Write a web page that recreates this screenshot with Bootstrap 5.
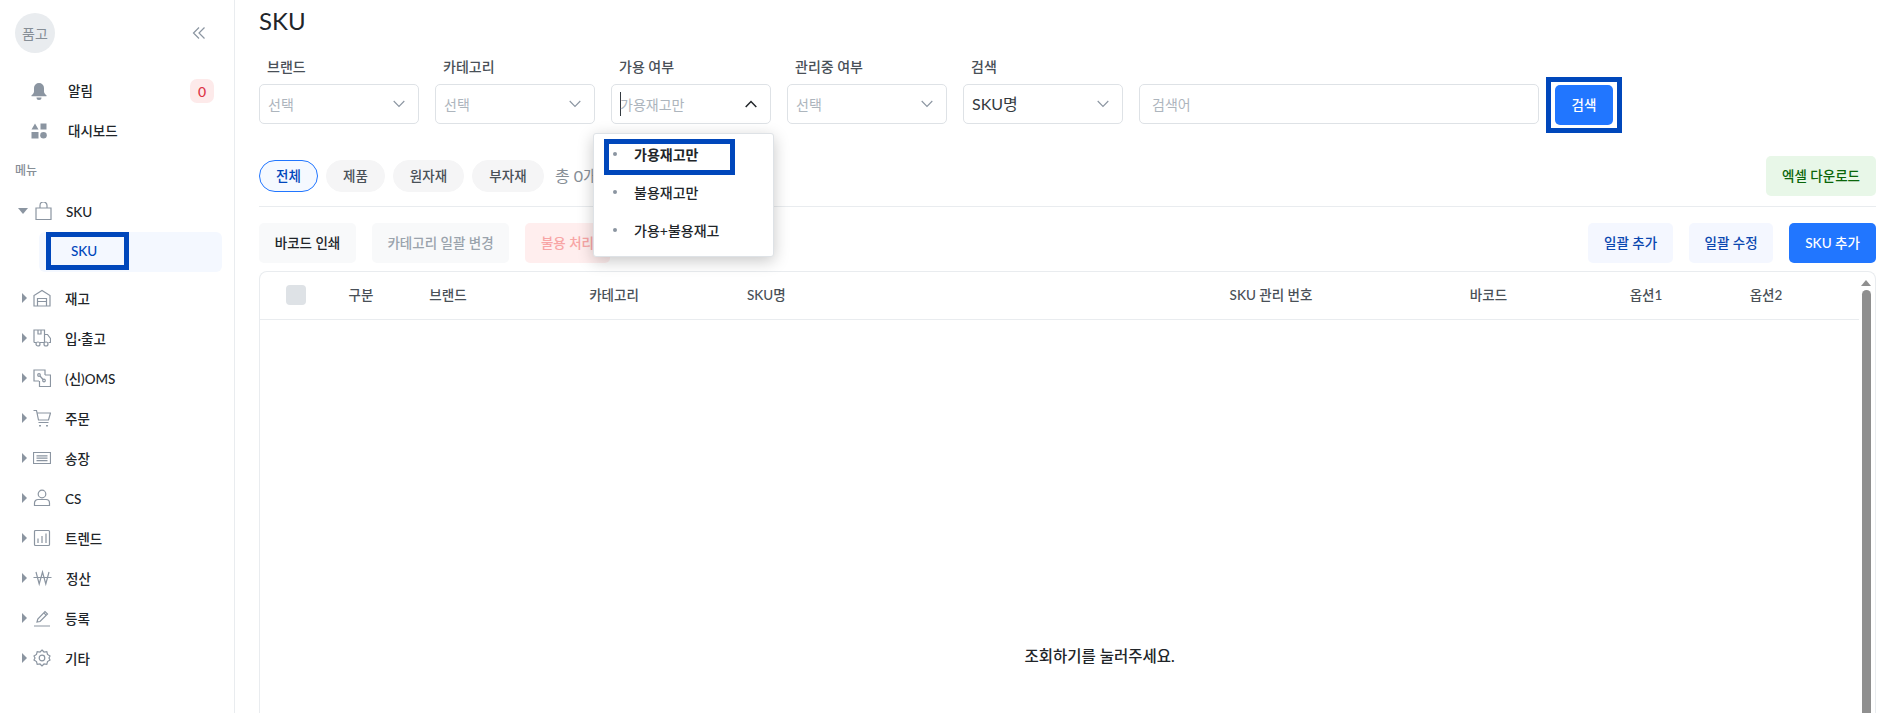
<!DOCTYPE html>
<html lang="ko">
<head>
<meta charset="utf-8">
<title>SKU</title>
<link href="https://cdn.jsdelivr.net/npm/bootstrap@5.3.0/dist/css/bootstrap.min.css" rel="stylesheet">
<style>
html,body{height:713px;overflow:hidden}
body{font-family:Lato,"Noto Sans CJK KR","Noto Sans",sans-serif;font-size:14px;color:#212529;background:#fff}
.shell{height:713px}
.side{width:235px;flex:none;border-right:1px solid #e9ecef;padding-top:13px}
.side-top{height:40px;padding:0 28px 0 15px;margin-bottom:18px}
.avatar{width:40px;height:40px;background:#e9ecef;color:#868e96;font-size:14px}
.srow{height:40px;font-weight:500;font-size:13.5px;color:#212529}
.srow-top{padding:0 20px 0 31px;gap:21px}
.srow-tree{padding-left:22px}
.srow-tree .lbl{margin-left:14px;padding-top:2px}
.tri{width:0;height:0;border-style:solid;border-width:5px 0 5px 5px;border-color:transparent transparent transparent #8b95a1;flex:none;margin-right:6px}
.tri-down{border-width:6px 5px 0 5px;border-color:#8b95a1 transparent transparent transparent;margin-left:-4px;margin-right:7px}
.nic{flex:none;stroke:#8b95a1;fill:none;stroke-width:1.2}
.cnt{width:24px;height:24px;background:#fdeaea;color:#dc3545;font-size:14px;border-radius:7px;font-weight:500}
.menu-h{height:40px;padding-left:15px;font-size:12px;color:#868e96;font-weight:500}
.subwrap{margin:0 12px 6px 39px;height:40px;background:#f4f8ff;border-radius:6px}
.subbox{width:83px;height:38px;margin:1px 0 0 7px;border:5px solid #0047bb;color:#0047bb;font-weight:500;padding-left:20px;line-height:28px;font-size:13.5px}
.mainp{padding:0 17px 0 24px;min-width:0}
.ttl{font-size:24px;font-weight:400;line-height:42px;margin:0;height:44px}
.filters{margin-top:13px;gap:16px}
.fgrp{width:160px;flex:none}
.flab{font-size:14px;font-weight:500;color:#495057;line-height:20px;margin-bottom:7px;padding-left:8px}
.fsel{height:40px;border:1px solid #dee2e6;border-radius:5px;padding:0 10px 0 8px;color:#adb5bd;font-size:14px;background:#fff}
.fsel.val{color:#343a40;font-size:16px}
.fsel svg{margin-right:3px}
.caret{width:1px;height:24px;background:#343a40;margin-right:-1px}
.finput{width:400px;height:40px;flex:none;font-size:14px;border-color:#dee2e6;border-radius:5px;padding:0 12px}
.finput::placeholder{color:#adb5bd}
.srch-mark{width:76px;height:56px;border:5px solid #0047bb;margin:0 0 -9px -9px;padding:3px 4px;flex:none}
.btn-x{height:40px;font-size:13.5px;font-weight:500;border:0;border-radius:5px;padding:0;white-space:nowrap}
.btn-blue{background:#2176ff;color:#fff}
.btn-blue:hover{background:#2176ff;color:#fff}
.srch-mark .btn-x{width:58px;padding:0;height:40px}
.btn-gray{background:#f8f9fa;color:#212529;width:97px}
.btn-mute{background:#f8f9fa;color:#9aa3ac;width:137px}
.btn-red{background:#ffeeee;color:#f8a5a5;width:85px}
.btn-pale{background:#f4f7ff;color:#0a47b0}
.wa{width:85px}.wb{width:84px}.wc{width:87px}
.btn-green{background:#e8f7e8;color:#0a660a;width:110px}
.tabs{margin-top:32px;height:40px}
.pillx{height:32px;border-radius:16px;background:#f5f5f6;color:#495057;font-size:13.5px;font-weight:500;border:1px solid #f5f5f6;padding:0;margin-right:8px;flex:none}
.pillx.on{background:#f5f9ff;border-color:#2176ff;color:#0047bb}
.tot{color:#868e96;font-size:16px;margin-left:3px}
.rule{border-top:1px solid #e9ecef;margin:10px 0 16px}
.acts{gap:16px}
.tbl-box{margin-top:8px;height:500px;border:1px solid #e9ecef;border-bottom:0;border-radius:8px 8px 0 0}
.tbl-main{min-width:0}
.tbl-x{table-layout:fixed;width:100%;margin:0;--bs-table-border-color:#e9ecef}
.tbl-x th{height:47px;vertical-align:middle;text-align:center;font-size:13.5px;font-weight:500;color:#495057;padding:0;white-space:nowrap}
.chk{width:20px;height:20px;background:#dee2e6;border-radius:4px;margin-left:-1px}
.empt{height:431px;padding-left:80px;font-size:15.5px;font-weight:500;padding-top:325px;text-align:center}
.sbar{width:16px;flex:none;padding-top:8px}
.sup{width:0;height:0;border-style:solid;border-width:0 5px 6px 5px;border-color:transparent transparent #8f8f8f transparent;margin:0 auto 4px 2px}
.sthumb{width:9px;height:500px;background:#8f8f8f;border-radius:5px;margin-left:3px}
.ddmenu{position:absolute;left:358px;top:133px;width:181px;height:124px;background:#fff;border:1px solid #dee2e6;border-radius:3px;box-shadow:0 4px 16px rgba(0,0,0,.22);z-index:5;padding:1px 0}
.dditem{height:38px;font-size:14px;font-weight:500;color:#212529;padding-left:19px}
.dot{width:4px;height:4px;background:#8b95a1;border-radius:50%;margin-right:17px;flex:none}
.ddmark{position:absolute;left:10px;top:5px;width:131px;height:36px;border:5px solid #0047bb;pointer-events:none}
</style>
</head>
<body>
<div class="shell d-flex">
  <aside class="side">
    <div class="side-top d-flex align-items-center justify-content-between">
      <div class="avatar rounded-circle d-flex align-items-center justify-content-center">품고</div>
      <svg width="14" height="14" viewBox="0 0 14 14" fill="none" stroke="#8b95a1" stroke-width="1.2"><path d="M7 1.500 1.500 7 7 12.500M12.500 1.500 7 7l5.500 5.500"/></svg>
    </div>
    <div class="srow srow-top d-flex align-items-center">
      <svg width="16" height="18" viewBox="0 0 16 18" fill="#8b95a1"><path d="M8 1a5 5 0 0 0-5 5v3.500c0 1.500-1 2.700-2.500 3.800v1h15v-1C14 12.200 13 11 13 9.500V6a5 5 0 0 0-5-5z"/><path d="M5.500 15.500a2.500 2.500 0 0 0 5 0z"/></svg>
      <span class="flex-grow-1">알림</span>
      <span class="cnt d-flex align-items-center justify-content-center">0</span>
    </div>
    <div class="srow srow-top d-flex align-items-center">
      <svg width="16" height="16" viewBox="0 0 16 16" fill="#8b95a1"><path d="M4 .5 7.500 6.500H.5zM9.500 .5h6v6h-6zM.5 9h7v6.500h-7z"/><circle cx="12.500" cy="12.300" r="3.300"/></svg>
      <span>대시보드</span>
    </div>
    <div class="menu-h d-flex align-items-center">메뉴</div>
    <div class="srow srow-tree d-flex align-items-center">
      <span class="tri tri-down"></span>
      <svg class="nic" width="17" height="18" viewBox="0 0 17 18"><path d="M1 6h15v11.500H1zM5 6V3.500a3.500 3.500 0 0 1 7 0V6"/></svg>
      <span class="lbl">SKU</span>
    </div>
    <div class="subwrap"><div class="subbox">SKU</div></div>
    <div class="srow srow-tree d-flex align-items-center">
      <span class="tri"></span>
      <svg class="nic" width="18" height="18" viewBox="0 0 18 18"><path d="M1 17V6.500L9 1.500l8 5V17zM4.500 17V9.500h9V17M4.500 12.500h9"/></svg>
      <span class="lbl">재고</span>
    </div>
    <div class="srow srow-tree d-flex align-items-center">
      <span class="tri"></span>
      <svg class="nic" width="18" height="18" viewBox="0 0 18 18"><path d="M1 13.500V1h10.500v12.500M11.500 5.500h3l3 4v4h-2M3 13.500H1M11 13.500H7M5 1v4h3V1"/><circle cx="5" cy="15" r="2"/><circle cx="13" cy="15" r="2"/></svg>
      <span class="lbl">입·출고</span>
    </div>
    <div class="srow srow-tree d-flex align-items-center">
      <span class="tri"></span>
      <svg class="nic" width="18" height="18" viewBox="0 0 18 18"><path d="M6 12H1V1h11v5M12 6h5.500v11.500H6.500V12"/><circle cx="6" cy="6" r="1.300"/><circle cx="11" cy="11.500" r="1.300"/><path d="m7 7 3 3.500"/></svg>
      <span class="lbl">(신)OMS</span>
    </div>
    <div class="srow srow-tree d-flex align-items-center">
      <span class="tri"></span>
      <svg class="nic" width="18" height="18" viewBox="0 0 18 18"><path d="M.5 1.500h3l2 9.500h10l2-7H4.500M5.500 13.500h10"/><path d="M7 16v1.500M14 16v1.500" stroke-width="1.800"/></svg>
      <span class="lbl">주문</span>
    </div>
    <div class="srow srow-tree d-flex align-items-center">
      <span class="tri"></span>
      <svg class="nic" width="18" height="18" viewBox="0 0 18 18"><path d="M.5 3.500h17v11H.5zM3.500 6.800h11M3.500 9.200h11M3.500 11.600h11"/></svg>
      <span class="lbl">송장</span>
    </div>
    <div class="srow srow-tree d-flex align-items-center">
      <span class="tri"></span>
      <svg class="nic" width="18" height="18" viewBox="0 0 18 18"><circle cx="9" cy="5" r="3.800"/><path d="M1.500 16.500v-2.500a3.500 3.500 0 0 1 3.500-3.500h8a3.500 3.500 0 0 1 3.500 3.500v2.500z"/></svg>
      <span class="lbl">CS</span>
    </div>
    <div class="srow srow-tree d-flex align-items-center">
      <span class="tri"></span>
      <svg class="nic" width="18" height="18" viewBox="0 0 18 18"><rect x="1.500" y="1.500" width="15" height="15" rx="1"/><path d="M5 14V9.500M9 14V7M13 14V4.500"/></svg>
      <span class="lbl">트렌드</span>
    </div>
    <div class="srow srow-tree d-flex align-items-center">
      <span class="tri"></span>
      <svg class="nic" width="19" height="18" viewBox="0 0 19 18"><path d="M3 3l3.200 12L9.500 3l3.300 12L16 3M.5 8.500h18"/></svg>
      <span class="lbl">정산</span>
    </div>
    <div class="srow srow-tree d-flex align-items-center">
      <span class="tri"></span>
      <svg class="nic" width="18" height="18" viewBox="0 0 18 18"><path d="M1 17h16M4 13l.8-3L12 2.500l2.500 2.500L7 12.500zM10.800 3.800l2.500 2.500"/></svg>
      <span class="lbl">등록</span>
    </div>
    <div class="srow srow-tree d-flex align-items-center">
      <span class="tri"></span>
      <svg class="nic" width="18" height="18" viewBox="0 0 18 18"><path d="M9 1l2 2 2.800-.3.700 2.700L17 7l-1 2 1 2-2.500 1.600-.7 2.700L11 15l-2 2-2-2-2.800.3-.7-2.700L1 11l1-2-1-2 2.500-1.600.7-2.700L7 3z"/><circle cx="9" cy="9" r="2.800"/></svg>
      <span class="lbl">기타</span>
    </div>
  </aside>

  <main class="mainp flex-grow-1 position-relative">
    <h1 class="ttl">SKU</h1>

    <div class="filters d-flex align-items-end">
      <div class="fgrp">
        <div class="flab">브랜드</div>
        <div class="fsel d-flex align-items-center justify-content-between"><span>선택</span><svg width="12" height="8" viewBox="0 0 12 8" fill="none" stroke="#8b95a1" stroke-width="1.100"><path d="m.7 1 5.300 5.500L11.300 1"/></svg></div>
      </div>
      <div class="fgrp">
        <div class="flab">카테고리</div>
        <div class="fsel d-flex align-items-center justify-content-between"><span>선택</span><svg width="12" height="8" viewBox="0 0 12 8" fill="none" stroke="#8b95a1" stroke-width="1.100"><path d="m.7 1 5.300 5.500L11.300 1"/></svg></div>
      </div>
      <div class="fgrp">
        <div class="flab">가용 여부</div>
        <div class="fsel d-flex align-items-center"><span class="caret"></span><span class="flex-grow-1">가용재고만</span><svg width="12" height="8" viewBox="0 0 12 8" fill="none" stroke="#212529" stroke-width="1.500"><path d="m.7 7 5.300-5.500L11.300 7"/></svg></div>
      </div>
      <div class="fgrp">
        <div class="flab">관리중 여부</div>
        <div class="fsel d-flex align-items-center justify-content-between"><span>선택</span><svg width="12" height="8" viewBox="0 0 12 8" fill="none" stroke="#8b95a1" stroke-width="1.100"><path d="m.7 1 5.300 5.500L11.300 1"/></svg></div>
      </div>
      <div class="fgrp">
        <div class="flab">검색</div>
        <div class="fsel val d-flex align-items-center justify-content-between"><span>SKU명</span><svg width="12" height="8" viewBox="0 0 12 8" fill="none" stroke="#8b95a1" stroke-width="1.100"><path d="m.7 1 5.300 5.500L11.300 1"/></svg></div>
      </div>
      <input class="form-control finput" type="text" placeholder="검색어">
      <div class="srch-mark"><button class="btn btn-x btn-blue" type="button">검색</button></div>
    </div>

    <div class="tabs d-flex align-items-center">
      <button class="pillx on" style="width:59px" type="button">전체</button>
      <button class="pillx" style="width:59px" type="button">제품</button>
      <button class="pillx" style="width:71px" type="button">원자재</button>
      <button class="pillx" style="width:72px" type="button">부자재</button>
      <span class="tot">총 0개</span>
      <button class="btn btn-x btn-green ms-auto" type="button">엑셀 다운로드</button>
    </div>
    <div class="rule"></div>

    <div class="acts d-flex">
      <button class="btn btn-x btn-gray" type="button">바코드 인쇄</button>
      <button class="btn btn-x btn-mute" type="button">카테고리 일괄 변경</button>
      <button class="btn btn-x btn-red" type="button">불용 처리</button>
      <button class="btn btn-x btn-pale wa ms-auto" type="button">일괄 추가</button>
      <button class="btn btn-x btn-pale wb" type="button">일괄 수정</button>
      <button class="btn btn-x btn-blue wc" type="button">SKU 추가</button>
    </div>

    <div class="tbl-box d-flex">
      <div class="tbl-main flex-grow-1">
        <table class="table tbl-x">
          <colgroup><col style="width:71px"><col style="width:60px"><col style="width:114px"><col style="width:218px"><col style="width:428px"><col style="width:240px"><col style="width:195px"><col style="width:120px"><col style="width:120px"><col></colgroup>
          <thead><tr>
            <th><div class="chk mx-auto"></div></th><th>구분</th><th>브랜드</th><th>카테고리</th><th class="text-start ps-4">SKU명</th><th>SKU 관리 번호</th><th>바코드</th><th>옵션1</th><th>옵션2</th><th></th>
          </tr></thead>
        </table>
        <div class="empt">조회하기를 눌러주세요.</div>
      </div>
      <div class="sbar"><div class="sup"></div><div class="sthumb"></div></div>
    </div>

    <div class="ddmenu">
      <div class="dditem d-flex align-items-center fw-bold"><span class="dot"></span>가용재고만</div>
      <div class="dditem d-flex align-items-center"><span class="dot"></span>불용재고만</div>
      <div class="dditem d-flex align-items-center"><span class="dot"></span>가용+불용재고</div>
      <div class="ddmark"></div>
    </div>
  </main>
</div>
<script src="https://cdn.jsdelivr.net/npm/bootstrap@5.3.0/dist/js/bootstrap.bundle.min.js"></script>
</body>
</html>
